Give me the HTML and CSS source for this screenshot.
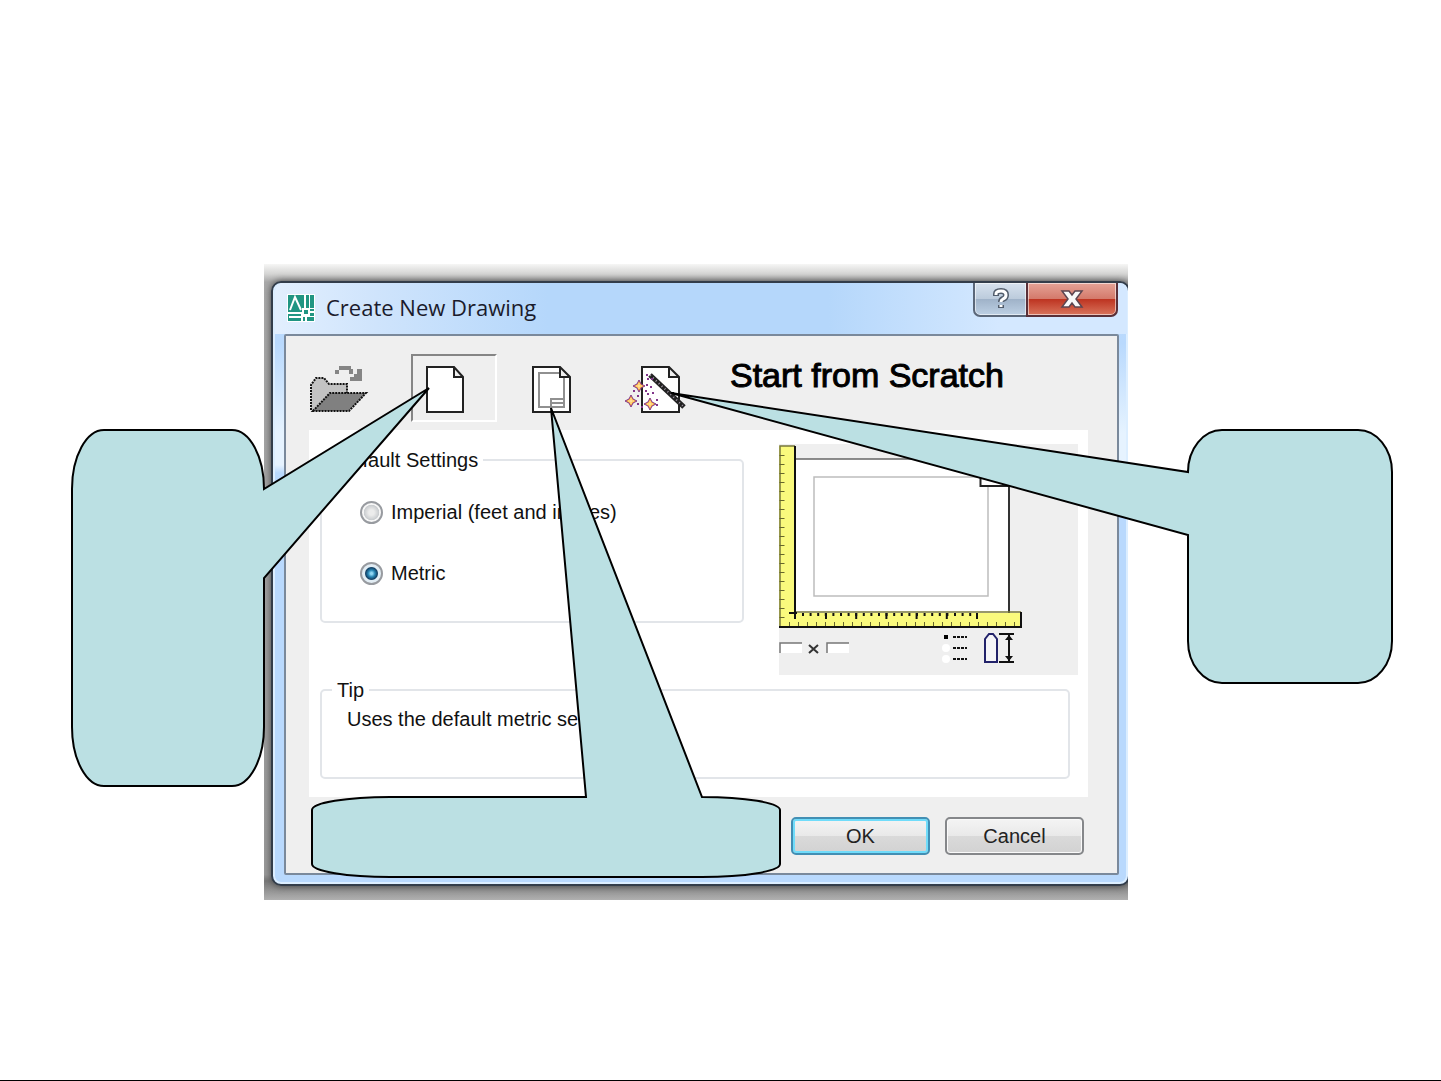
FILE: index.html
```html
<!DOCTYPE html>
<html lang="en">
<head>
<meta charset="utf-8">
<title>Create New Drawing</title>
<link rel="stylesheet" href="styles.css">
</head>
<body>
<main class="slide">
  <div class="desktop">
    <section class="window" aria-labelledby="window-title">
      <header class="titlebar">
        <svg class="app-icon" width="28" height="28" viewBox="0 0 28 28" aria-hidden="true">
          <path fill="#fff" d="M0 0h28v28H0z"/>
          <path fill="#209582" d="M1 1h16v17H1zM19 1h3v13h-3zM23 1h4v13h-4zM1 20h13v7H1zM16 23h11v4H16zM23 15h4v7h-4z"/>
          <path fill="none" stroke="#fff" stroke-width="2" d="M3 16 8 3l6 13M2 23h12"/>
          <path fill="#209582" stroke="#fff" stroke-width="2" d="M16 15h6v6h-6zM19 21v6M22 18h5"/>
        </svg>
        <h1 class="window-title" id="window-title">Create New Drawing</h1>
        <div class="caption-buttons">
          <button class="caption help" type="button" aria-label="Help">
            <svg width="20" height="24" viewBox="0 0 20 24"><path d="M5 9V7q0-3 5-3t5 4q0 3-3 4-2 1-2 3M10 18v3" fill="none" stroke="#525d6c" stroke-width="6"/><path d="M5 8V7q0-3 5-3t5 4q0 3-3 4-2 1-2 3M10 18v2" fill="none" stroke="#fff" stroke-width="3"/></svg>
          </button>
          <button class="caption close" type="button" aria-label="Close">
            <svg width="24" height="20" viewBox="0 0 24 20"><path d="M2 2h7l3 4 3-4h7l-6 8 6 8h-7l-3-4-3 4H2l6-8z" fill="#f8f8f8" stroke="#5c4550" stroke-width="1.5"/></svg>
          </button>
        </div>
      </header>
      <form class="client">
        <div class="toolbar">
          <button class="tool" type="button" aria-label="Open a Drawing">
            <svg width="80" height="64" viewBox="0 0 80 64">
              <path fill="#c3c3c3" d="M4 54V29l5-7h8l5 6h18v9H23L7 54z"/>
              <path fill="#808080" d="M6 55 23 37h36L42 55z"/>
              <path fill="none" stroke="#111" stroke-width="2" stroke-dasharray="2 1" d="M4 54V29l5-7h8l5 6h18v9M6 55 23 37h36L42 55z"/>
              <path fill="#858585" d="M28 14h4v4h-4zM32 10h12v4H32zM42 13h4v5h-4zM50 13h5v12H43v-4h4v-3h3z"/>
            </svg>
          </button>
          <button class="tool pressed" type="button" aria-pressed="true" aria-label="Start from Scratch">
            <svg width="80" height="64" viewBox="0 0 80 64">
              <path fill="#fff" stroke="#222" stroke-width="2" d="M14 11h27l9 10v35H14zM41 11v10h9"/>
            </svg>
          </button>
          <button class="tool" type="button" aria-label="Use a Template">
            <svg width="80" height="64" viewBox="0 0 80 64">
              <path fill="#fff" stroke="#222" stroke-width="2" d="M14 11h27l10 10v35H14zM41 11v10h10"/>
              <path fill="none" stroke="#909090" stroke-width="2" d="M40 17H20v34h25V22M32 51v-8h13M32 47h13"/>
            </svg>
          </button>
          <button class="tool" type="button" aria-label="Use a Wizard">
            <svg width="80" height="64" viewBox="0 0 80 64">
              <path fill="#fff" stroke="#222" stroke-width="2" d="M17 11h27l10 10v35H17zM44 11v10h10"/>
              <path stroke="#222" stroke-width="5" d="m25 19 34 32"/>
              <path stroke="#a79bab" stroke-width="2" stroke-dasharray="1 3" d="m25 19 34 32"/>
              <g fill="#81358b"><path d="M21 18h2v2h-2zM22 22h2v2h-2zM26 22h2v2h-2zM21 28h2v2h-2zM20 34h2v2h-2zM25 30h2v2h-2zM8 34h2v2H8zM12 39h2v2h-2zM12 47h2v2h-2zM16 50h2v2h-2zM22 37h2v2h-2zM27 36h2v2h-2zM31 43h2v2h-2zM31 48h2v2h-2z"/></g>
              <g fill="#ffb33c" stroke="#81358b" stroke-width="1"><path d="m14 24 2 4 4 2-4 2-2 4-2-4-4-2 4-2z"/><path d="m6 39 2 4 4 2-4 2-2 4-2-4-4-2 4-2z"/><path d="m25 42 2 4 4 2-4 2-2 4-2-4-4-2 4-2z"/></g>
              <path stroke="#ffefb0" stroke-width="1" d="M14 27v6M11 30h6M6 42v6M3 45h6M25 45v6M22 48h6"/>
            </svg>
          </button>
          <h2 class="page-title">Start from Scratch</h2>
        </div>
        <div class="panel">
          <fieldset class="group settings">
            <legend>Default Settings</legend>
            <label class="option"><input type="radio" name="units" value="imperial"><span>Imperial (feet and inches)</span></label>
            <label class="option"><input type="radio" name="units" value="metric" checked><span>Metric</span></label>
          </fieldset>
          <svg class="preview" width="299" height="231" viewBox="0 0 299 231" role="img" aria-label="Drawing preview">
            <path fill="#efefef" d="M0 0h299v231H0z"/>
            <path fill="#fff" d="M17 15h213v154H17z"/>
            <path fill="none" stroke="#666" stroke-width="1.5" d="M17 15h213"/>
            <path fill="none" stroke="#333" stroke-width="2" d="M230 42v127"/>
            <path fill="none" stroke="#bdbdbd" stroke-width="1.5" d="M35 33h174v119H35z"/>
            <path fill="#fff" d="M202 15h28v27h-28z"/>
            <path fill="none" stroke="#222" stroke-width="2" d="M201.500 30v12H231"/>
            <path fill="#fafa7d" d="M0 2h16v167h226v14H0z"/>
            <path fill="none" stroke="#77773c" stroke-width="1.500" d="M1 183V2h15M16 168h226"/>
            <path fill="none" stroke="#111" stroke-width="2" d="M16 2v173M10 169h8M0 183h242v-15"/>
            <path fill="none" stroke="#66662b" stroke-width="5" stroke-dasharray="1 8" d="M3 11v170"/>
            <path fill="none" stroke="#66662b" stroke-width="4" stroke-dasharray="1 8" d="M10 180h230"/>
            <path fill="none" stroke="#111" stroke-width="3" stroke-dasharray="2 5.600" d="M23 170.500h176"/>
            <path fill="none" stroke="#111" stroke-width="6" stroke-dasharray="2 28.200" d="M46 172h153"/>
            <path fill="#fff" d="M0 199h23v10H0zM48 199h22v10H48z"/>
            <path fill="none" stroke="#777" stroke-width="1.500" d="M1 209V199h22M48 209V199h22"/>
            <path fill="none" stroke="#333" stroke-width="2" d="m30 201 9 8m0-8-9 8"/>
            <path d="M165 191h4v4h-4z"/><g fill="#fff"><circle cx="167" cy="204" r="4"/><circle cx="167" cy="215" r="4"/></g>
            <path stroke="#111" stroke-width="2" stroke-dasharray="3 1" d="M174 193h14M174 204h14M174 215h14"/>
            <path fill="#f5f5f8" stroke="#22226a" stroke-width="2" d="M206 218v-23l4-5h4l4 5v23z"/>
            <path fill="none" stroke="#111" stroke-width="2" d="M220 190h15M220 218h15M230 190v28"/>
            <path fill="#111" d="m230 191 4 5h-8zM230 217l4-5h-8z"/>
          </svg>
          <fieldset class="group tip">
            <legend>Tip</legend>
            <p>Uses the default metric settings.</p>
          </fieldset>
        </div>
        <div class="actions">
          <button class="action primary" type="button">OK</button>
          <button class="action" type="button">Cancel</button>
        </div>
      </form>
    </section>
  </div>
  <svg class="callouts" viewBox="0 0 1441 1081" preserveAspectRatio="none" aria-hidden="true">
    <path d="M104 430H232A32 59 0 0 1 264 489L429 388 264 578V727A32 59 0 0 1 232 786H104A32 59 0 0 1 72 727V489A32 59 0 0 1 104 430Z"/>
    <path d="M390 797H586L551 408 702 797A78 13 0 0 1 780 810V864A78 13 0 0 1 702 877H390A78 13 0 0 1 312 864V810A78 13 0 0 1 390 797Z"/>
    <path d="M1222 430H1358A34 42 0 0 1 1392 472V641A34 42 0 0 1 1358 683H1222A34 42 0 0 1 1188 641V535L671 393 1188 472A34 42 0 0 1 1222 430Z"/>
  </svg>
</main>
</body>
</html>
```
FILE: styles.css
```css
* {
  box-sizing: border-box;
}

body {
  margin: 0;
  background: #fff;
  color: #111;
  font: 20px/24px "Liberation Sans", Arial, sans-serif;
}

h1,
h2,
p {
  margin: 0;
  font-weight: 400;
}

.slide {
  position: relative;
  display: grid;
  grid-template-columns: 264fr minmax(0, 864fr) 313fr;
  align-items: start;
  min-height: 100vh;
  padding-top: 264px;
  border-bottom: 1px solid #000;
}

/* Cropped piece of desktop that carries the window shadow */
.desktop {
  grid-column: 2;
  padding: 17px 0 14px 7px;
  overflow: hidden;
  background: linear-gradient(#f6f6f5, #d4d4d3 10px, #a9a9a9 18px, #999 96%, #777 97%, #b0b0b0);
}

.window {
  margin-right: -2px;
  border: 2px solid #333d4a;
  border-radius: 10px;
  background: linear-gradient(#bddbfc, #b9d9fd 60px, #e6f3ff 150px, #e6f3ff 182px, #b9d9fd 190px);
  box-shadow: inset 0 0 0 2px #dceeff, 0 0 7px #444;
  padding: 0 9px 9px 11px;
}

.titlebar {
  display: flex;
  align-items: center;
  gap: 11px;
  height: 51px;
  margin: 0 -8px 0 -9px;
  padding: 0 9px 2px 12px;
  border-radius: 8px 8px 0 0;
  background: linear-gradient(90deg, #e2effe, #cfe4fc 12%, #b5d7fb 32%, #b5d7fb 65%, #d4e8ff 85%);
}

.app-icon {
  flex: none;
}

.window-title {
  padding-bottom: 2px;
  font: 22px/28px "Open Sans", "Noto Sans", sans-serif;
  color: #1b1b2c;
  white-space: nowrap;
}

.caption-buttons {
  display: flex;
  align-self: flex-start;
  margin-left: auto;
}

.caption {
  display: grid;
  place-items: center;
  height: 34px;
  padding: 0;
  border: 2px solid #5b6779;
  border-top: 0;
  box-shadow: inset 0 0 0 1px #ffffff90;
}

.help {
  width: 53px;
  border-right: 0;
  border-radius: 0 0 0 7px;
  background: linear-gradient(#d7e2ee, #bccbdc 49%, #9fb2c8 50%, #bdd0e4);
}

.close {
  width: 92px;
  border-color: #592f38;
  border-radius: 0 0 7px 0;
  background: linear-gradient(#e5a397, #d47a6b 49%, #bd3320 50%, #d9745c);
}

.client {
  border: 2px solid #7a899b;
  border-radius: 2px;
  background: #efefef;
  padding: 18px 29px 18px 23px;
}

.toolbar {
  display: flex;
  align-items: flex-start;
  gap: 20px;
  height: 76px;
  margin-left: -4px;
}

.tool {
  flex: none;
  width: 86px;
  height: 68px;
  padding: 0;
  border: 2px solid transparent;
  background: none;
  text-align: left;
}

.tool svg {
  display: block;
}

.pressed {
  border-color: #858585 #fff #fff #858585;
}

.page-title {
  padding-left: 1px;
  font-size: 34px;
  line-height: 42px;
  color: #000;
  -webkit-text-stroke: 1px #000;
  white-space: nowrap;
}

.panel {
  display: grid;
  grid-template-columns: minmax(0, 424fr) 299px;
  justify-content: space-between;
  column-gap: 35px;
  row-gap: 3px;
  padding: 14px 10px 18px 11px;
  background: #fff;
}

.group {
  min-width: 0;
  margin: 0;
  border: 2px solid #e2e5e9;
  border-radius: 5px;
  padding: 0 10px;
}

.group legend {
  padding: 0 5px;
}

.settings {
  height: 175px;
  margin-top: 4px;
}

.option {
  display: flex;
  align-items: center;
  gap: 8px;
  width: max-content;
  margin: 28px 0 37px 28px;
}

.option input {
  appearance: none;
  width: 23px;
  height: 23px;
  margin: 0;
  border: 2px solid #989ba0;
  border-radius: 50%;
  background: radial-gradient(circle, #ececec 20%, #c9cccf 55%, #f7f7f7 60%);
}

.option input:checked {
  background: radial-gradient(circle, #8fd6f3 0 8%, #2887b5 25%, #113f64 44%, #e2edf4 52%);
}

.tip {
  grid-column: 1 / -1;
  height: 101px;
  margin-right: 8px;
}

.tip p {
  padding: 5px 0 0 15px;
}

.actions {
  display: flex;
  justify-content: flex-end;
  gap: 15px;
  margin: 20px 4px 0 0;
}

.action {
  width: 139px;
  height: 38px;
  padding: 0;
  border: 2px solid #85878a;
  border-radius: 5px;
  background: linear-gradient(#f4f4f4, #e9e9e9 49%, #dadada 50%, #d2d2d2);
  box-shadow: inset 0 0 0 1px #fafafa;
  color: #222;
  font: inherit;
}

.primary {
  border-color: #428fb4;
  box-shadow: inset 0 0 0 2px #70dcfa;
}

.callouts {
  position: absolute;
  top: 0;
  left: 0;
  width: 100%;
  height: 1081px;
  pointer-events: none;
}

.callouts path {
  fill: #bbe0e3;
  stroke: #000;
  stroke-width: 2px;
  vector-effect: non-scaling-stroke;
}
```
